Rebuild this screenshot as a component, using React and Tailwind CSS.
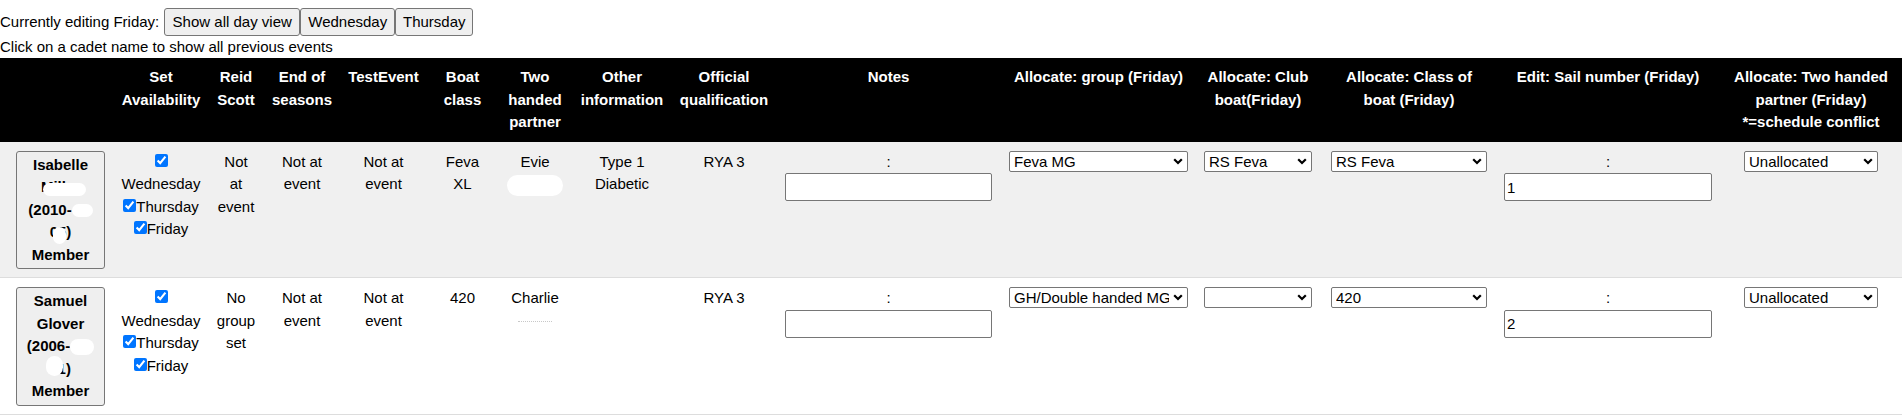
import React from "react";

const Chevron = () => (
  <svg
    className="pointer-events-none absolute right-[5px] top-[7px]"
    width="10"
    height="7"
    viewBox="0 0 10 7"
  >
    <path d="M1.2 1.2 L5 5 L8.8 1.2" fill="none" stroke="#000" strokeWidth="2.2" />
  </svg>
);

const Dropdown = ({ value, width }) => (
  <span className={`relative inline-block align-top ${width}`}>
    <select
      defaultValue={value}
      className="block h-[21px] w-full appearance-none rounded-[2px] border border-[#767676] bg-white pl-[4px] pr-[18px] text-[15px] leading-[19px] text-black"
    >
      <option value={value}>{value}</option>
    </select>
    <Chevron />
  </span>
);

const ColonInput = ({ value, width }) => (
  <div>
    <div>:</div>
    <input
      type="text"
      defaultValue={value}
      className={`mx-auto block h-[28px] ${width} rounded-[2px] border border-[#767676] bg-white px-[2px] text-[15px] text-black`}
    />
  </div>
);

const Blob = ({ className }) => (
  <span className={`inline-block rounded-full bg-white align-middle ${className}`} />
);

const Availability = () => (
  <div>
    <div>
      <input type="checkbox" defaultChecked className="m-0 h-[13px] w-[13px]" />
    </div>
    <div>Wednesday</div>
    <div>
      <input type="checkbox" defaultChecked className="m-0 h-[13px] w-[13px]" />
      Thursday
    </div>
    <div>
      <input type="checkbox" defaultChecked className="m-0 h-[13px] w-[13px]" />
      Friday
    </div>
  </div>
);

const NameButton = ({ children }) => (
  <button
    type="button"
    className="w-[89px] rounded-[3px] border border-[#767676] bg-[#efefef] py-[2px] text-center font-bold leading-[22.5px] text-black"
  >
    {children}
  </button>
);

const td = "align-top text-center px-[4px] pt-[9px] pb-[8px]";
const th = "align-top text-center font-bold px-[4px] pt-2 pb-2";

const App = () => {
  return (
    <div className="min-h-[415px] bg-white font-['Liberation_Sans',Arial,sans-serif] text-[15px] leading-[22.5px] text-black">
      <div className="flex h-[36px] items-center pt-2">
        <span>Currently editing Friday:</span>
        <span className="ml-[5px] flex">
          <button type="button" className="h-[28px] w-[136px] rounded-[3px] border border-[#767676] bg-[#efefef] text-[15px]">
            Show all day view
          </button>
          <button type="button" className="h-[28px] w-[95px] rounded-[3px] border border-[#767676] bg-[#efefef] text-[15px]">
            Wednesday
          </button>
          <button type="button" className="h-[28px] w-[78px] rounded-[3px] border border-[#767676] bg-[#efefef] text-[15px]">
            Thursday
          </button>
        </span>
      </div>
      <div className="h-[22px] leading-[22px]">Click on a cadet name to show all previous events</div>

      <table className="w-[1902px] table-fixed border-collapse">
        <colgroup>
          <col className="w-[112px]" />
          <col className="w-[98px]" />
          <col className="w-[52px]" />
          <col className="w-[80px]" />
          <col className="w-[83px]" />
          <col className="w-[75px]" />
          <col className="w-[70px]" />
          <col className="w-[104px]" />
          <col className="w-[100px]" />
          <col className="w-[229px]" />
          <col className="w-[191px]" />
          <col className="w-[128px]" />
          <col className="w-[174px]" />
          <col className="w-[224px]" />
          <col className="w-[182px]" />
        </colgroup>
        <thead>
          <tr className="bg-black text-white">
            <th className={th}></th>
            <th className={th}>Set<br />Availability</th>
            <th className={th}>Reid<br />Scott</th>
            <th className={th}>End of<br />seasons</th>
            <th className={th}>TestEvent</th>
            <th className={th}>Boat<br />class</th>
            <th className={th}>Two<br />handed<br />partner</th>
            <th className={th}>Other<br />information</th>
            <th className={th}>Official<br />qualification</th>
            <th className={th}>Notes</th>
            <th className={th}>Allocate: group (Friday)</th>
            <th className={th}>Allocate: Club<br />boat(Friday)</th>
            <th className={th}>Allocate: Class of<br />boat (Friday)</th>
            <th className={th}>Edit: Sail number (Friday)</th>
            <th className={th}>Allocate: Two handed<br />partner (Friday)<br />*=schedule conflict</th>
          </tr>
        </thead>
        <tbody>
          <tr className="border-b border-[#dddddd] bg-[#f0f0f0]">
            <td className="pl-[16px] pr-[7px] pt-[9px] pb-[8px] text-left align-top">
              <NameButton>
                <div>Isabelle</div>
                <div>
                  <span className="relative">
                    Miller
                    <span className="absolute left-[2px] right-[-6px] top-[5px] h-[13px] rounded-full bg-white" />
                  </span>
                </div>
                <div>
                  (2010-<Blob className="h-[13px] w-[21px]" />
                </div>
                <div>
                  <span className="relative">
                    05)
                    <span className="absolute left-[3px] top-[4px] h-[17px] w-[13px] rounded-full bg-white" />
                  </span>
                </div>
                <div>Member</div>
              </NameButton>
            </td>
            <td className={td}><Availability /></td>
            <td className={td}>Not<br />at<br />event</td>
            <td className={td}>Not at<br />event</td>
            <td className={td}>Not at<br />event</td>
            <td className={td}>Feva<br />XL</td>
            <td className={td}>
              <div>Evie</div>
              <div className="h-[22.5px]"><Blob className="h-[21px] w-[56px]" /></div>
            </td>
            <td className={td}>Type 1<br />Diabetic</td>
            <td className={td}>RYA 3</td>
            <td className={td}><ColonInput value="" width="w-[207px]" /></td>
            <td className={td}><Dropdown value="Feva MG" width="w-[179px]" /></td>
            <td className={td}><Dropdown value="RS Feva" width="w-[108px]" /></td>
            <td className={td}><Dropdown value="RS Feva" width="w-[156px]" /></td>
            <td className={td}><ColonInput value="1" width="w-[208px]" /></td>
            <td className={td}><Dropdown value="Unallocated" width="w-[134px]" /></td>
          </tr>
          <tr className="border-b border-[#dddddd] bg-white">
            <td className="pl-[16px] pr-[7px] pt-[9px] pb-[8px] text-left align-top">
              <NameButton>
                <div>Samuel</div>
                <div>Glover</div>
                <div>
                  (2006-<Blob className="h-[16px] w-[24px]" />
                </div>
                <div>
                  <span className="relative">
                    11)
                    <span className="absolute left-[-4px] top-[-4px] h-[20px] w-[17px] rounded-full bg-white" />
                  </span>
                </div>
                <div>Member</div>
              </NameButton>
            </td>
            <td className={td}><Availability /></td>
            <td className={td}>No<br />group<br />set</td>
            <td className={td}>Not at<br />event</td>
            <td className={td}>Not at<br />event</td>
            <td className={td}>420</td>
            <td className={td}>
              <div>Charlie</div>
              <div className="h-[22.5px]">
                <span className="inline-block h-[1px] w-[34px] border-t border-dotted border-[#c8c8c8] align-middle" />
              </div>
            </td>
            <td className={td}></td>
            <td className={td}>RYA 3</td>
            <td className={td}><ColonInput value="" width="w-[207px]" /></td>
            <td className={td}><Dropdown value="GH/Double handed MG" width="w-[179px]" /></td>
            <td className={td}><Dropdown value="" width="w-[108px]" /></td>
            <td className={td}><Dropdown value="420" width="w-[156px]" /></td>
            <td className={td}><ColonInput value="2" width="w-[208px]" /></td>
            <td className={td}><Dropdown value="Unallocated" width="w-[134px]" /></td>
          </tr>
        </tbody>
      </table>
    </div>
  );
};

export default App;
